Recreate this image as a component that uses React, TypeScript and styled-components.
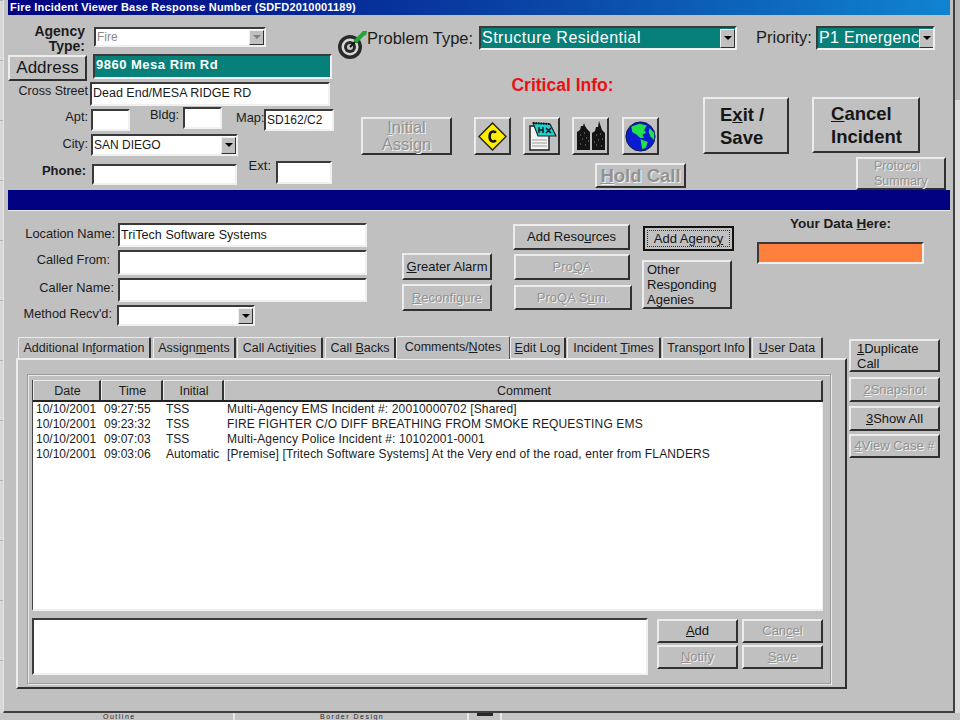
import React, { FC, ReactNode } from 'react';
import styled, { createGlobalStyle, css } from 'styled-components';

const GlobalStyle = createGlobalStyle`
  html, body { margin: 0; padding: 0; background: #c0c0c0; }
  body { font-family: "Liberation Sans", Arial, sans-serif; color: #111; overflow: hidden; }
  u { text-underline-offset: 1px; }
`;

type Spot = { $w?: number; $h?: number; $ml?: number; $mt?: number };

const spot = css<Spot>`
  ${({ $w }) => ($w !== undefined ? `width: ${$w}px;` : '')}
  ${({ $h }) => ($h !== undefined ? `height: ${$h}px;` : '')}
  ${({ $ml }) => ($ml ? `margin-left: ${$ml}px;` : '')}
  ${({ $mt }) => ($mt ? `margin-top: ${$mt}px;` : '')}
  flex: none;
  box-sizing: border-box;
`;

const Page = styled.div`
  width: 960px;
  height: 720px;
  overflow: hidden;
  display: flex;
  flex-direction: column;
`;

const Desktop = styled.div`
  height: 713px;
  display: flex;
  flex: none;
`;

const LeftEdge = styled.div`
  width: 3px;
  background: repeating-linear-gradient(180deg, #b4b4b4 0 1px, #d8d8d8 1px 60px);
  flex: none;
`;

const RightEdge = styled.div`
  flex: 1;
  background: linear-gradient(180deg, #b8b8b8 0 100px, #dcdcdc 100px);
`;

const Win = styled.div`
  width: 952px;
  height: 713px;
  flex: none;
  box-sizing: border-box;
  padding-left: 5px;
  background: #c0c0c0;
  border-left: 1px solid #e4e4e4;
  border-right: 2px solid #404040;
  border-bottom: 2px solid #404040;
`;

const TitleBar = styled.div`
  width: 942px;
  height: 15px;
  margin-left: -1px;
  box-sizing: border-box;
  padding-left: 2px;
  background: linear-gradient(90deg, #000080 0%, #0a4aa8 60%, #1084d0 100%);
  color: #fff;
  font-size: 11px;
  font-weight: 700;
  line-height: 14px;
  letter-spacing: 0.2px;
  white-space: nowrap;
`;

const TopSection = styled.div`
  height: 175px;
  margin-left: -1px;
  display: flex;
`;

const LeftForm = styled.div`
  width: 353px;
  flex: none;
  padding-top: 9px;
`;

const RightForm = styled.div`
  flex: 1;
  min-width: 0;
`;

const Row = styled.div<Spot>`
  ${spot}
  display: flex;
  align-items: flex-start;
`;

const Col = styled.div<Spot>`
  ${spot}
  display: flex;
  flex-direction: column;
  align-items: flex-start;
`;

const Label = styled.div<Spot & { $size?: number; $bold?: boolean; $pr?: number; $align?: string; $lh?: number }>`
  ${spot}
  text-align: ${({ $align }) => $align ?? 'right'};
  padding-right: ${({ $pr }) => $pr ?? 0}px;
  font-size: ${({ $size }) => $size ?? 12.8}px;
  font-weight: ${({ $bold }) => ($bold ? 700 : 400)};
  line-height: ${({ $lh }) => $lh ?? 18}px;
  white-space: nowrap;
  color: #1c1c1c;
`;

const Field = styled.div<Spot & { $bg?: string; $fg?: string; $size?: number; $bold?: boolean; $ls?: number; $up?: number }>`
  ${spot}
  display: flex;
  align-items: center;
  overflow: hidden;
  white-space: nowrap;
  padding-left: 1px;
  padding-bottom: ${({ $up }) => $up ?? 0}px;
  letter-spacing: ${({ $ls }) => $ls ?? 0}px;
  background: ${({ $bg }) => $bg ?? '#fff'};
  color: ${({ $fg }) => $fg ?? '#1a1a1a'};
  font-size: ${({ $size }) => $size ?? 12.5}px;
  font-weight: ${({ $bold }) => ($bold ? 700 : 400)};
  border-style: solid;
  border-width: 2px;
  border-color: #3a3a3a #f0f0f0 #f0f0f0 #3a3a3a;
`;

const DropButton = styled.span<{ $off?: boolean }>`
  width: 15px;
  height: calc(100% - 1px);
  margin-left: auto;
  flex: none;
  display: flex;
  align-items: center;
  justify-content: center;
  box-sizing: border-box;
  background: #c0c0c0;
  border-style: solid;
  border-width: 1px;
  border-color: #efefef #303030 #303030 #efefef;

  &::after {
    content: '';
    border-left: 4px solid transparent;
    border-right: 4px solid transparent;
    border-top: 4px solid ${({ $off }) => ($off ? '#808080' : '#000')};
  }
`;

const Btn = styled.button<Spot & { $size?: number; $bold?: boolean; $pl?: number; $lh?: number; $focus?: boolean }>`
  ${spot}
  display: block;
  padding: 0 0 0 ${({ $pl }) => $pl ?? 0}px;
  background: #c0c0c0;
  font-family: "Liberation Sans", Arial, sans-serif;
  font-size: ${({ $size }) => $size ?? 13}px;
  font-weight: ${({ $bold }) => ($bold ? 700 : 400)};
  line-height: ${({ $lh }) => ($lh ? `${$lh}px` : 1.16)};
  color: #161616;
  text-align: ${({ $pl }) => ($pl ? 'left' : 'center')};
  border-style: solid;
  border-width: 2px;
  border-color: #ececec #303030 #303030 #ececec;
  ${({ $focus }) =>
    $focus
      ? `border-color: #111; outline: 1px dotted #333; outline-offset: -5px;`
      : ''}

  &:disabled {
    color: #929292;
    text-shadow: 1px 1px 0 #f2f2f2;
  }
`;

const IconBtn = styled(Btn)`
  display: flex;
  align-items: center;
  justify-content: center;
`;

const CriticalInfo = styled.div`
  width: 325px;
  height: 20px;
  margin-top: -1px;
  margin-bottom: 3px;
  text-align: center;
  color: #ee0f14;
  font-size: 17.5px;
  font-weight: 700;
  line-height: 20px;
  white-space: nowrap;
  text-indent: 78px;
`;

const Band = styled.div`
  width: 942px;
  height: 21px;
  margin-left: -1px;
  background: #000080;
  border-bottom: 1px solid #e6edf4;
  box-sizing: border-box;
`;

const Middle = styled.div`
  height: 126px;
  margin-left: -1px;
  display: flex;
  align-items: flex-start;
`;

const Lower = styled.div`
  display: flex;
  align-items: flex-start;
  margin-left: 7px;
`;

const TabBlock = styled.div`
  width: 831px;
  flex: none;
`;

const TabStrip = styled.div`
  height: 21px;
  display: flex;
  align-items: flex-end;
  padding-left: 2px;
`;

const Tab = styled.div<Spot & { $active?: boolean }>`
  ${spot}
  height: ${({ $active }) => ($active ? 23 : 21)}px;
  ${({ $active }) => ($active ? 'margin-bottom: -1px; position: relative; z-index: 1; background: #c0c0c0;' : '')}
  display: flex;
  align-items: center;
  justify-content: center;
  padding-bottom: ${({ $active }) => ($active ? 3 : 0)}px;
  font-size: 12.5px;
  white-space: nowrap;
  color: #1c1c1c;
  border-style: solid;
  border-width: 1px 2px 0 1px;
  border-color: #ececec #303030 transparent #ececec;
  ${({ $active }) => ($active ? 'border-right-width: 1px; border-right-color: #505050;' : '')}
  border-radius: 2px 2px 0 0;
`;

const TabPanel = styled.div`
  height: 331px;
  box-sizing: border-box;
  padding: 14px 0 0 9px;
  border-style: solid;
  border-width: 2px;
  border-color: #ececec #303030 #303030 #ececec;
`;

const GroupBox = styled.div`
  width: 804px;
  height: 310px;
  box-sizing: border-box;
  padding: 5px 0 0 4px;
  border: 1px solid #9a9a9a;
  box-shadow: 1px 1px 0 #ececec, inset 1px 1px 0 #ececec;
`;

const ListView = styled.div`
  width: 791px;
  height: 231px;
  box-sizing: border-box;
  display: flex;
  flex-direction: column;
  background: #fff;
  border-left: 1px solid #454545;
  border-bottom: 2px solid #efefef;
`;

const cols = '68px 62px 61px 1fr';

const ListHead = styled.div`
  height: 22px;
  flex: none;
  display: grid;
  grid-template-columns: ${cols};
  background: #c0c0c0;
  border-bottom: 2px solid #222;
  box-sizing: border-box;
`;

const HeadCell = styled.div`
  display: flex;
  align-items: center;
  justify-content: center;
  padding-left: 2px;
  font-size: 12.5px;
  color: #1c1c1c;
  box-sizing: border-box;
  border-top: 1px solid #ececec;
  border-left: 1px solid #ececec;
  border-right: 2px solid #333;
`;

const ListRow = styled.div`
  height: 15px;
  display: grid;
  grid-template-columns: ${cols};
  font-size: 12px;
  line-height: 15px;
  color: #1c1c1c;
  white-space: nowrap;
`;

const Cell = styled.div<{ $wide?: boolean }>`
  padding-left: 3px;
  letter-spacing: ${({ $wide }) => ($wide ? 0.14 : 0)}px;
`;

const ListBody = styled.div`
  flex: 1;
  border-right: 1px solid #efefef;
`;

const NoteBar = styled.div`
  display: flex;
  align-items: flex-start;
  margin-top: 7px;
`;

const NoteButtons = styled.div`
  margin: 1px 0 0 9px;
  display: grid;
  grid-template-columns: 81px 81px;
  grid-auto-rows: 24px;
  column-gap: 4px;
  row-gap: 2px;
`;

const SideButtons = styled.div`
  margin-left: 2px;
  width: 91px;
  flex: none;
`;

const BottomStrip = styled.div`
  height: 7px;
  flex: none;
  display: flex;
  align-items: flex-start;
  background: #c4c4c4;
  color: #2a2a2a;
  font-size: 7px;
  line-height: 7px;
`;

const Peek = styled.span<{ $ml: number; $w: number }>`
  margin-left: ${({ $ml }) => $ml}px;
  width: ${({ $w }) => $w}px;
  flex: none;
  letter-spacing: 1.5px;
  white-space: nowrap;
`;

const Divider = styled.span<{ $ml: number }>`
  margin-left: ${({ $ml }) => $ml}px;
  width: 2px;
  height: 7px;
  flex: none;
  background: #e8e8e8;
`;

const StripIcon = styled.span`
  margin-left: 8px;
  width: 16px;
  height: 3px;
  flex: none;
  background: #2a2a2a;
`;

const TargetIcon: FC = () => (
  <svg width="32" height="30" viewBox="0 0 32 30">
    <circle cx="13" cy="17" r="12" fill="#2a2a2a" />
    <circle cx="13" cy="17" r="8.5" fill="#d8d8d8" />
    <circle cx="13" cy="17" r="6" fill="#2a2a2a" />
    <circle cx="13" cy="17" r="3" fill="#c8c8c8" />
    <path d="M13 17 L21 9" stroke="#111" strokeWidth="2" />
    <path d="M18 12 L27 3" stroke="#23a53c" strokeWidth="4" />
    <path d="M25 1 L30 1 L29 6 Z" fill="#23a53c" />
  </svg>
);

const DiamondIcon: FC = () => (
  <svg width="29" height="29" viewBox="0 0 30 30">
    <path d="M15 1 L29 15 L15 29 L1 15 Z" fill="#ffee00" stroke="#222" strokeWidth="1.5" />
    <path d="M18.5 11 C17 9 12 9 12 15 C12 21 17 21 18.5 19" fill="none" stroke="#111" strokeWidth="2.6" />
  </svg>
);

const NoteIcon: FC = () => (
  <svg width="30" height="30" viewBox="0 0 30 30">
    <path d="M3 5 L22 5 L22 29 L3 29 Z" fill="#f4f4f4" stroke="#222" strokeWidth="1.5" />
    <path d="M6 2 L23 3 L29 15 L11 15 Z" fill="#1fd0d0" stroke="#222" strokeWidth="1.2" />
    <path d="M6 2 L23 3" stroke="#111" strokeWidth="2" strokeDasharray="1.5 1" />
    <path d="M12 6 L12 12 M16 6 L16 12 M12 9 L16 9 M19 7 L24 12 M24 7 L19 12" stroke="#111" strokeWidth="1.4" />
    <path d="M5 19 H20 M5 22 H20 M5 25 H20" stroke="#9a9a9a" strokeWidth="1" />
  </svg>
);

const CityIcon: FC = () => (
  <svg width="30" height="30" viewBox="0 0 30 30">
    <path d="M1 29 L1 11 L4 9 L5 5 L7 5 L8 2 L9 5 L11 8 L14 11 L14 29 Z" fill="#141414" />
    <path d="M16 29 L16 12 L19 10 L20 6 L22 6 L23 0 L25 6 L26 9 L29 12 L29 29 Z" fill="#141414" />
    <path d="M4 14 h1 M8 12 h1 M6 18 h1 M10 17 h1 M4 23 h1 M9 24 h1 M12 20 h1 M20 14 h1 M24 13 h1 M22 19 h1 M26 18 h1 M20 24 h1 M25 25 h1 M18 21 h1" stroke="#8f8f8f" strokeWidth="1" />
  </svg>
);

const GlobeIcon: FC = () => (
  <svg width="31" height="31" viewBox="0 0 34 34">
    <circle cx="17" cy="17" r="16" fill="#0a1ccf" stroke="#101040" strokeWidth="1" />
    <path d="M7 6 L16 3 L24 5 L21 10 L23 13 L19 15 L21 18 L17 19 L13 15 L8 12 Z" fill="#22e04a" />
    <path d="M17 20 L25 23 L23 29 L19 31 L18 26 Z" fill="#22e04a" />
    <path d="M27 8 L32 13 L32 21 L28 17 L26 12 Z" fill="#22e04a" />
  </svg>
);

const rows: string[][] = [
  ['10/10/2001', '09:27:55', 'TSS', 'Multi-Agency EMS Incident #: 20010000702 [Shared]'],
  ['10/10/2001', '09:23:32', 'TSS', 'FIRE FIGHTER C/O DIFF BREATHING FROM SMOKE REQUESTING EMS'],
  ['10/10/2001', '09:07:03', 'TSS', 'Multi-Agency Police Incident #: 10102001-0001'],
  [
    '10/10/2001',
    '09:03:06',
    'Automatic',
    '[Premise] [Tritech Software Systems] At the Very end of the road, enter from FLANDERS',
  ],
];

const tabs: { w: number; ml: number; label: ReactNode; active?: boolean }[] = [
  { w: 133, ml: 0, label: <>Additional In<u>f</u>ormation</> },
  { w: 83, ml: 2, label: <>Assign<u>m</u>ents</> },
  { w: 86, ml: 1, label: <>Call Acti<u>v</u>ities</> },
  { w: 71, ml: 2, label: <>Call <u>B</u>acks</> },
  { w: 114, ml: 0, label: <>Comments/<u>N</u>otes</>, active: true },
  { w: 56, ml: 0, label: <><u>E</u>dit Log</> },
  { w: 94, ml: 1, label: <>Incident <u>T</u>imes</> },
  { w: 89, ml: 1, label: <>Trans<u>p</u>ort Info</> },
  { w: 71, ml: 1, label: <><u>U</u>ser Data</> },
];

export default function App() {
  return (
    <Page>
      <GlobalStyle />
      <Desktop>
        <LeftEdge />
        <Win>
          <TitleBar>Fire Incident Viewer Base Response Number (SDFD2010001189)</TitleBar>
          <TopSection>
            <LeftForm>
              <Row $h={30}>
                <Label $w={77} $size={14} $bold $lh={15}>
                  Agency
                  <br />
                  Type:
                </Label>
                <Field $w={172} $h={20} $ml={9} $mt={3} $fg="#8c8c8c" $size={12}>
                  Fire
                  <DropButton $off />
                </Field>
              </Row>
              <Row $h={28}>
                <Btn $w={79} $h={26} $mt={1} $size={17}>
                  Address
                </Btn>
                <Field $w={239} $h={25} $ml={6} $bg="#08807a" $fg="#fff" $bold $size={13} $ls={0.5} $up={4}>
                  9860 Mesa Rim Rd
                </Field>
              </Row>
              <Row>
                <Label $w={80} $size={12.5}>Cross Street</Label>
                <Field $w={240} $h={24} $ml={2} $up={2}>
                  Dead End/MESA RIDGE RD
                </Field>
              </Row>
              <Row $mt={3}>
                <Label $w={80} $mt={-1}>Apt:</Label>
                <Field $w={39} $h={22} $ml={3} />
                <Label $w={28} $ml={20} $mt={-3}>Bldg:</Label>
                <Field $w={39} $h={22} $ml={5} $mt={-2} />
                <Label $w={27} $ml={14}>Map:</Label>
                <Field $w={70} $h={22} $ml={1} $size={12}>
                  SD162/C2
                </Field>
              </Row>
              <Row $mt={3}>
                <Label $w={80} $mt={1}>City:</Label>
                <Field $w={147} $h={22} $ml={3} $size={12}>
                  SAN DIEGO
                  <DropButton />
                </Field>
              </Row>
              <Row $mt={5}>
                <Label $w={78} $size={13} $bold $mt={1}>Phone:</Label>
                <Field $w={145} $h={21} $ml={6} $mt={3} />
                <Label $w={24} $ml={10} $size={13} $mt={-4}>Ext:</Label>
                <Field $w={56} $h={23} $ml={5} />
              </Row>
            </LeftForm>
            <RightForm>
              <Row $h={61} $ml={-24}>
                <Col $w={30} $mt={15}>
                  <TargetIcon />
                </Col>
                <Label $w={110} $size={16.5} $align="left" $mt={13} $lh={20}>
                  Problem Type:
                </Label>
                <Field $w={258} $h={24} $ml={2} $mt={11} $bg="#08807a" $fg="#fff" $size={16} $ls={0.5}>
                  Structure Residential
                  <DropButton />
                </Field>
                <Label $w={56} $ml={19} $size={16.5} $align="left" $mt={12} $lh={20}>
                  Priority:
                </Label>
                <Field $w={119} $h={24} $ml={4} $mt={11} $bg="#08807a" $fg="#fff" $size={16} $ls={0.3}>
                  P1 Emergenc
                  <DropButton />
                </Field>
              </Row>
              <Row>
                <Col $w={325}>
                  <CriticalInfo>Critical Info:</CriticalInfo>
                  <Row $mt={19}>
                    <Btn disabled $w={91} $h={38} $size={16.5} $lh={17}>
                      <u>I</u>nitial
                      <br />
                      Assign
                    </Btn>
                    <IconBtn $w={37} $h={38} $ml={22}>
                      <DiamondIcon />
                    </IconBtn>
                    <IconBtn $w={37} $h={38} $ml={12}>
                      <NoteIcon />
                    </IconBtn>
                    <IconBtn $w={37} $h={38} $ml={12}>
                      <CityIcon />
                    </IconBtn>
                    <IconBtn $w={37} $h={38} $ml={13}>
                      <GlobeIcon />
                    </IconBtn>
                  </Row>
                  <Btn disabled $w={91} $h={25} $ml={234} $mt={8} $size={18.5} $bold>
                    <u>H</u>old Call
                  </Btn>
                </Col>
                <Col $ml={17} $mt={21}>
                  <Row>
                    <Btn $w={86} $h={57} $size={18.5} $bold $pl={15} $lh={23}>
                      E<u>x</u>it /
                      <br />
                      Save
                    </Btn>
                    <Btn $w={108} $h={56} $ml={23} $size={18.5} $bold $pl={17} $lh={23}>
                      <u>C</u>ancel
                      <br />
                      Incident
                    </Btn>
                  </Row>
                  <Btn disabled $w={90} $h={33} $ml={153} $mt={3} $size={12.5} $pl={16} $lh={15}>
                    Protocol
                    <br />
                    Summary
                  </Btn>
                </Col>
              </Row>
            </RightForm>
          </TopSection>
          <Band />
          <Middle>
            <Col $w={359} $mt={12}>
              <Row>
                <Label $w={107} $mt={2}>Location Name:</Label>
                <Field $w={249} $h={24} $ml={3} $up={1} $ls={0.05}>
                  TriTech Software Systems
                </Field>
              </Row>
              <Row $mt={3}>
                <Label $w={107} $pr={5} $mt={1}>Called From:</Label>
                <Field $w={249} $h={25} $ml={3} />
              </Row>
              <Row $mt={3}>
                <Label $w={107} $pr={1} $mt={1}>Caller Name:</Label>
                <Field $w={249} $h={24} $ml={3} />
              </Row>
              <Row $mt={3}>
                <Label $w={107} $pr={3}>Method Recv'd:</Label>
                <Field $w={138} $h={21} $ml={2}>
                  <DropButton />
                </Field>
              </Row>
            </Col>
            <Col $ml={35} $mt={42}>
              <Btn $w={90} $h={27}>
                <u>G</u>reater Alarm
              </Btn>
              <Btn disabled $w={90} $h={27} $mt={4}>
                <u>R</u>econfigure
              </Btn>
            </Col>
            <Col $ml={21} $mt={13}>
              <Btn $w={117} $h={26}>
                Add Reso<u>u</u>rces
              </Btn>
              <Btn disabled $w={116} $h={26} $ml={1} $mt={4}>
                Pro<u>Q</u>A
              </Btn>
              <Btn disabled $w={118} $h={25} $ml={1} $mt={5}>
                ProQA S<u>u</u>m.
              </Btn>
            </Col>
            <Col $ml={11} $mt={15}>
              <Btn $w={91} $h={25} $focus>
                Add Agenc<u>y</u>
              </Btn>
              <Btn $w={90} $h={49} $ml={-1} $mt={9} $pl={3}>
                Other
                <br />
                Res<u>p</u>onding
                <br />
                Agenies
              </Btn>
            </Col>
            <Col $ml={23} $mt={5}>
              <Label $w={147} $ml={10} $h={16} $bold $lh={16} $size={13.5} $align="center">
                Your Data <u>H</u>ere:
              </Label>
              <Field $w={167} $h={22} $mt={10} $bg="#ff7f3c" />
            </Col>
          </Middle>
          <Lower>
            <TabBlock>
              <TabStrip>
                {tabs.map((t, i) => (
                  <Tab key={i} $w={t.w} $ml={t.ml} $active={t.active}>
                    <span>{t.label}</span>
                  </Tab>
                ))}
              </TabStrip>
              <TabPanel>
                <GroupBox>
                  <ListView>
                    <ListHead>
                      <HeadCell>Date</HeadCell>
                      <HeadCell>Time</HeadCell>
                      <HeadCell>Initial</HeadCell>
                      <HeadCell>Comment</HeadCell>
                    </ListHead>
                    <ListBody>
                      {rows.map((r, i) => (
                        <ListRow key={i}>
                          {r.map((c, j) => (
                            <Cell key={j} $wide={j === 3}>{c}</Cell>
                          ))}
                        </ListRow>
                      ))}
                    </ListBody>
                  </ListView>
                  <NoteBar>
                    <Field $w={616} $h={57} />
                    <NoteButtons>
                      <Btn>
                        <u>A</u>dd
                      </Btn>
                      <Btn disabled>
                        Can<u>c</u>el
                      </Btn>
                      <Btn disabled>
                        <u>N</u>otify
                      </Btn>
                      <Btn disabled>
                        <u>S</u>ave
                      </Btn>
                    </NoteButtons>
                  </NoteBar>
                </GroupBox>
              </TabPanel>
            </TabBlock>
            <SideButtons>
              <Btn $w={91} $h={33} $mt={2} $pl={6}>
                <u>1</u>Duplicate
                <br />
                Call
              </Btn>
              <Btn disabled $w={91} $h={25} $mt={5}>
                <u>2</u>Snapshot
              </Btn>
              <Btn $w={91} $h={25} $mt={4}>
                <u>3</u>Show All
              </Btn>
              <Btn disabled $w={91} $h={24} $mt={3}>
                <u>4</u>View Case #
              </Btn>
            </SideButtons>
          </Lower>
        </Win>
        <RightEdge />
      </Desktop>
      <BottomStrip>
        <Peek $ml={103} $w={30}>Outline</Peek>
        <Divider $ml={100} />
        <Peek $ml={85} $w={65}>Border Design</Peek>
        <Divider $ml={82} />
        <StripIcon />
        <Divider $ml={7} />
      </BottomStrip>
    </Page>
  );
}
